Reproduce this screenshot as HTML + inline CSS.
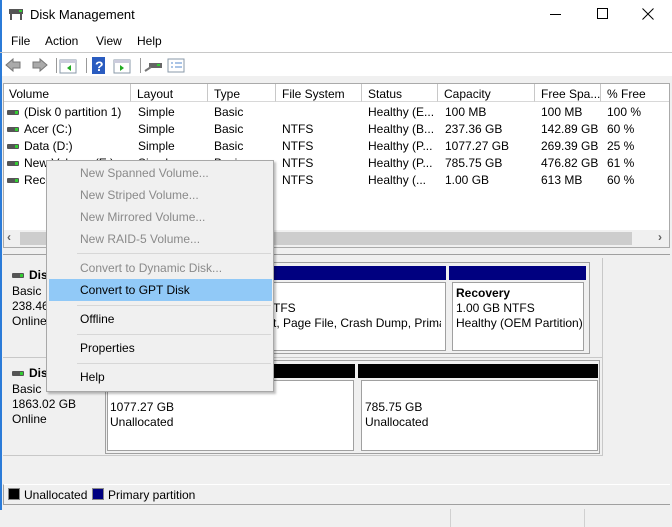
<!DOCTYPE html>
<html><head><style>
*{margin:0;padding:0;box-sizing:border-box}
body{width:672px;height:527px;overflow:hidden;background:#f0f0f0;font-family:"Liberation Sans",sans-serif;font-size:12px;color:#000;position:relative}
.a{position:absolute;white-space:nowrap}
.hdr{position:absolute;top:84px;height:18px;border-right:1px solid #c8c8c8;border-bottom:1px solid #d8d8d8;padding:3px 0 0 6px;background:#fff;white-space:nowrap;overflow:hidden}
.drv{display:inline-block;width:12px;height:5px;background:#555;border-radius:1px;position:relative;vertical-align:middle;margin-right:5px}
.drv:after{content:"";position:absolute;right:1px;top:1px;width:3px;height:3px;background:#3c3}
.mi{position:absolute;left:80px;color:#000}
.dis{color:#8a8a8a}
.sep{position:absolute;left:30px;right:2px;height:1px;background:#d7d7d7}
.box{position:absolute;background:#fff;border:1px solid #a0a0a0}
</style></head><body>
<div class="a" style="left:0;top:0;width:672px;height:76px;background:#fff"></div>
<div class="a" style="left:0;top:0;width:2px;height:510px;background:#2b7bd8"></div>
<svg class="a" style="left:8px;top:8px" width="17" height="14"><rect x="1" y="1" width="14" height="5" fill="#555"/><rect x="11" y="2" width="3" height="2" fill="#3c3"/><rect x="2" y="6" width="2" height="6" fill="#555"/><rect x="12" y="6" width="2" height="6" fill="#555"/></svg>
<div class="a" style="left:30px;top:7px;font-size:13px">Disk Management</div>
<div class="a" style="left:550px;top:14px;width:11px;height:1px;background:#000"></div>
<div class="a" style="left:597px;top:8px;width:11px;height:11px;border:1px solid #000"></div>
<svg class="a" style="left:642px;top:8px" width="12" height="12"><path d="M0.5 0.5L11.5 11.5M11.5 0.5L0.5 11.5" stroke="#000"/></svg>
<div class="a" style="left:11px;top:34px;font-size:12px">File</div>
<div class="a" style="left:45px;top:34px">Action</div>
<div class="a" style="left:96px;top:34px">View</div>
<div class="a" style="left:137px;top:34px">Help</div>
<div class="a" style="left:0;top:52px;width:672px;height:1px;background:#c8c8c8"></div>
<svg class="a" style="left:5px;top:57px" width="190" height="18">
<path d="M1 8L8 2V5H15V11H8V14Z" fill="#aaa" stroke="#777"/>
<path d="M42 8L35 2V5H28V11H35V14Z" fill="#aaa" stroke="#777"/>
<rect x="51" y="1" width="1" height="15" fill="#999"/>
<rect x="55" y="3" width="16" height="13" fill="#fff" stroke="#8a9aa8"/><rect x="55" y="3" width="16" height="3" fill="#ccd"/><path d="M66 8L62 11L66 14Z" fill="#2a2"/>
<rect x="81" y="1" width="1" height="15" fill="#999"/>
<rect x="87" y="0" width="13" height="17" fill="#2a5cc0"/><text x="90" y="14" fill="#fff" font-size="14" font-weight="bold" font-family="Liberation Sans">?</text>
<rect x="109" y="3" width="16" height="13" fill="#fff" stroke="#8a9aa8"/><rect x="109" y="3" width="16" height="3" fill="#ccd"/><path d="M115 8L119 11L115 14Z" fill="#2a2"/>
<rect x="135" y="1" width="1" height="15" fill="#999"/>
<rect x="144" y="6" width="13" height="5" fill="#666"/><rect x="152" y="7" width="3" height="2" fill="#3c3"/><path d="M140 14L146 10" stroke="#777" stroke-width="2"/>
<rect x="163" y="2" width="16" height="13" fill="#fff" stroke="#8a9aa8"/><path d="M166 6h2M166 10h2M170 6h7M170 10h7" stroke="#5588cc"/>
</svg>
<div class="a" style="left:3px;top:83px;width:667px;height:165px;background:#fff;border:1px solid #aaa"></div>
<div class="hdr" style="left:4px;width:127px;padding-left:5px">Volume</div>
<div class="hdr" style="left:131px;width:77px">Layout</div>
<div class="hdr" style="left:208px;width:68px">Type</div>
<div class="hdr" style="left:276px;width:86px">File System</div>
<div class="hdr" style="left:362px;width:76px">Status</div>
<div class="hdr" style="left:438px;width:97px">Capacity</div>
<div class="hdr" style="left:535px;width:66px">Free Spa...</div>
<div class="hdr" style="left:601px;width:68px;border-right:none">% Free</div>
<div class="a" style="left:7px;top:104px;line-height:17px"><span class="drv"></span>(Disk 0 partition 1)<br><span class="drv"></span>Acer (C:)<br><span class="drv"></span>Data (D:)<br><span class="drv"></span>New Volume (E:)<br><span class="drv"></span>Recovery</div>
<div class="a" style="left:138px;top:104px;line-height:17px">Simple<br>Simple<br>Simple<br>Simple<br>Simple</div>
<div class="a" style="left:214px;top:104px;line-height:17px">Basic<br>Basic<br>Basic<br>Basic<br>Basic</div>
<div class="a" style="left:282px;top:104px;line-height:17px">&nbsp;<br>NTFS<br>NTFS<br>NTFS<br>NTFS</div>
<div class="a" style="left:368px;top:104px;line-height:17px">Healthy (E...<br>Healthy (B...<br>Healthy (P...<br>Healthy (P...<br>Healthy (...</div>
<div class="a" style="left:445px;top:104px;line-height:17px">100 MB<br>237.36 GB<br>1077.27 GB<br>785.75 GB<br>1.00 GB</div>
<div class="a" style="left:541px;top:104px;line-height:17px">100 MB<br>142.89 GB<br>269.39 GB<br>476.82 GB<br>613 MB</div>
<div class="a" style="left:607px;top:104px;line-height:17px">100 %<br>60 %<br>25 %<br>61 %<br>60 %</div>
<div class="a" style="left:4px;top:230px;width:665px;height:17px;background:#f0f0f0"></div>
<div class="a" style="left:20px;top:232px;width:612px;height:13px;background:#cdcdcd"></div>
<div class="a" style="left:7px;top:230px;color:#606060;font-weight:bold">‹</div>
<div class="a" style="left:658px;top:230px;color:#606060;font-weight:bold">›</div>
<div class="a" style="left:3px;top:254px;width:667px;height:230px;border-top:1px solid #a0a0a0"></div>
<div class="a" style="left:3px;top:258px;width:600px;height:100px;border-right:1px solid #c8c8c8;border-bottom:1px solid #c8c8c8"></div>
<div class="a" style="left:3px;top:356px;width:600px;height:100px;border-right:1px solid #c8c8c8;border-bottom:1px solid #c8c8c8"></div>
<div class="a" style="left:105px;top:262px;width:485px;height:92px;border:1px solid #a0a0a0;background:#f0f0f0"></div>
<div class="a" style="left:106px;top:266px;width:340px;height:14px;background:#000080"></div>
<div class="a" style="left:449px;top:266px;width:137px;height:14px;background:#000080"></div>
<div class="box" style="left:108px;top:282px;width:338px;height:69px"></div>
<div class="box" style="left:452px;top:282px;width:132px;height:69px"></div>
<div class="a" style="left:273px;top:301px">TFS</div>
<div class="a" style="left:273px;top:316px;width:168px;overflow:hidden">t, Page File, Crash Dump, Prima</div>
<div class="a" style="left:456px;top:286px;font-weight:bold">Recovery</div>
<div class="a" style="left:456px;top:301px">1.00 GB NTFS</div>
<div class="a" style="left:456px;top:316px;width:126px;overflow:hidden">Healthy (OEM Partition)</div>
<div class="a" style="left:12px;top:268px;font-weight:bold"><span class="drv"></span>Disk 0</div>
<div class="a" style="left:12px;top:284px;line-height:15px">Basic<br>238.46 GB<br>Online</div>
<div class="a" style="left:105px;top:360px;width:495px;height:94px;border:1px solid #a0a0a0;background:#f0f0f0"></div>
<div class="a" style="left:106px;top:364px;width:249px;height:14px;background:#000"></div>
<div class="a" style="left:358px;top:364px;width:240px;height:14px;background:#000"></div>
<div class="box" style="left:107px;top:380px;width:247px;height:71px"></div>
<div class="box" style="left:361px;top:380px;width:237px;height:71px"></div>
<div class="a" style="left:110px;top:400px;line-height:15px">1077.27 GB<br>Unallocated</div>
<div class="a" style="left:365px;top:400px;line-height:15px">785.75 GB<br>Unallocated</div>
<div class="a" style="left:12px;top:366px;font-weight:bold"><span class="drv"></span>Disk 1</div>
<div class="a" style="left:12px;top:382px;line-height:15px">Basic<br>1863.02 GB<br>Online</div>
<div class="a" style="left:3px;top:484px;width:667px;height:21px;border-top:1px solid #fff;border-bottom:1px solid #a0a0a0;border-left:1px solid #a0a0a0"></div>
<div class="a" style="left:8px;top:488px;width:12px;height:12px;background:#000;border:1px solid #888"></div>
<div class="a" style="left:24px;top:488px">Unallocated</div>
<div class="a" style="left:92px;top:488px;width:12px;height:12px;background:#000080;border:1px solid #888"></div>
<div class="a" style="left:108px;top:488px">Primary partition</div>
<div class="a" style="left:450px;top:509px;width:1px;height:18px;background:#d0d0d0"></div>
<div class="a" style="left:584px;top:509px;width:1px;height:18px;background:#d0d0d0"></div>
<div class="a" style="left:46px;top:160px;width:228px;height:232px;background:#f0f0f0;border:1px solid #a8a8a8;box-shadow:2px 2px 2px rgba(0,0,0,.25)">
<div class="mi dis" style="left:33px;top:5px">New Spanned Volume...</div>
<div class="mi dis" style="left:33px;top:27px">New Striped Volume...</div>
<div class="mi dis" style="left:33px;top:49px">New Mirrored Volume...</div>
<div class="mi dis" style="left:33px;top:71px">New RAID-5 Volume...</div>
<div class="sep" style="top:92px"></div>
<div class="mi dis" style="left:33px;top:100px">Convert to Dynamic Disk...</div>
<div class="a" style="left:2px;top:118px;width:223px;height:22px;background:#91c9f7"></div>
<div class="mi" style="left:33px;top:122px">Convert to GPT Disk</div>
<div class="sep" style="top:144px"></div>
<div class="mi" style="left:33px;top:151px">Offline</div>
<div class="sep" style="top:173px"></div>
<div class="mi" style="left:33px;top:180px">Properties</div>
<div class="sep" style="top:202px"></div>
<div class="mi" style="left:33px;top:209px">Help</div>
</div>
</body></html>
